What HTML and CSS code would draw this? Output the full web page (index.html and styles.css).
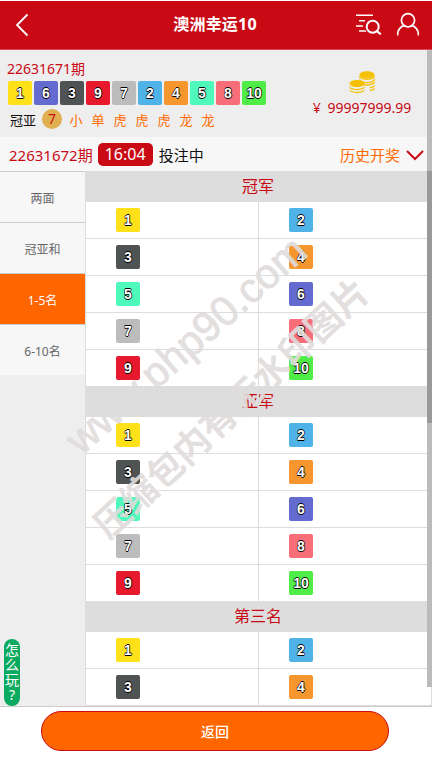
FILE: index.html
```html
<!DOCTYPE html>
<html lang="zh">
<head>
<meta charset="utf-8">
<title>澳洲幸运10</title>
<link rel="stylesheet" href="styles.css">
</head>
<body>
<div class="page">
  <header class="topbar">
    <svg class="back" width="14" height="24" viewBox="0 0 14 24"><path d="M12.5 1.5 2 12l10.500 10.500" fill="none" stroke="#fff" stroke-width="1.8"/></svg>
    <h1 class="title">澳洲幸运10</h1>
    <div class="top-icons">
      <svg width="26" height="22" viewBox="0 0 26 22"><path d="M0 2.300h17M3 7.700h6M0 13h7M3 18h7" fill="none" stroke="#fff" stroke-width="1.6"/><circle cx="16.700" cy="13.700" r="6" fill="none" stroke="#fff" stroke-width="2"/><path d="m20.800 18 4 3.300" stroke="#fff" stroke-width="2.200"/></svg>
      <svg width="22" height="24" viewBox="1 0 22 24"><circle cx="12" cy="8.200" r="6.600" fill="none" stroke="#fff" stroke-width="1.700"/><path d="M1.500 23.500c0-6.500 4-9.500 7-9.800M22.500 23.500c0-6.500-4-9.500-7-9.800" fill="none" stroke="#fff" stroke-width="1.700"/></svg>
    </div>
  </header>

  <section class="info">
    <div class="info-left">
      <div class="period">22631671期</div>
      <div class="balls">
        <span class="ball c1">1</span><span class="ball c6">6</span><span class="ball c3">3</span><span class="ball c9">9</span><span class="ball c7">7</span><span class="ball c2">2</span><span class="ball c4">4</span><span class="ball c5">5</span><span class="ball c8">8</span><span class="ball c10">10</span>
      </div>
      <div class="result">
        <span class="result-label">冠亚</span>
        <span class="sum">7</span>
        <span class="tag">小</span><span class="tag">单</span><span class="tag">虎</span><span class="tag">虎</span><span class="tag">虎</span><span class="tag">龙</span><span class="tag">龙</span>
      </div>
    </div>
    <div class="wallet">
      <svg width="26" height="26" viewBox="0 0 26 26">
        <g fill="none" stroke="#f5c000" stroke-width="1.4"><path d="M10.500 6c0 2 4 3.300 7.500 3.300S25.500 8 25.500 6M10.500 9.200c0 2 4 3.300 7.500 3.300s7.500-1.300 7.500-3.300M14 14.500c2 .6 6 .6 7 0 2-.4 4.500-1.300 4.500-2.200M21 17.700c2.500-.4 4.500-1.300 4.500-2.200M21 20.500c2.500-.4 4.500-1.300 4.500-2.200"/></g>
        <path d="M10.500 4.800c0-2 3.400-3.600 7.500-3.600s7.500 1.600 7.500 3.600-3.400 3.600-7.500 3.600-7.500-1.600-7.500-3.600Z" fill="#f5c000"/>
        <path d="M.5 13.500c0-2 3.400-3.600 7.500-3.600s7.500 1.600 7.500 3.600-3.400 3.600-7.500 3.600S.5 15.500.5 13.500Z" fill="#f5c000"/>
        <path d="M.5 15.500c0 2 3.400 3.400 7.500 3.400s7.500-1.400 7.500-3.400v1.300c0 2-3.400 3.400-7.500 3.400S.5 18.800.5 16.800ZM.5 18.500c0 2 3.400 3.400 7.500 3.400s7.500-1.400 7.500-3.400v1.300c0 2-3.400 3.400-7.500 3.400S.5 21.800.5 19.800Z" fill="#f5c000"/>
      </svg>
      <div class="money">¥ 99997999.99</div>
    </div>
  </section>

  <section class="status">
    <span class="next-period">22631672期</span>
    <span class="timer">16:04</span>
    <span class="state">投注中</span>
    <span class="history">历史开奖</span>
    <svg class="chevron" width="18" height="11" viewBox="0 0 18 11"><path d="m1 1 8 8 8-8" fill="none" stroke="#c90a15" stroke-width="2"/></svg>
  </section>

  <main class="main">
    <nav class="side">
      <a class="side-item">两面</a>
      <a class="side-item">冠亚和</a>
      <a class="side-item active">1-5名</a>
      <a class="side-item">6-10名</a>
    </nav>
    <div class="board">
      <section class="group">
        <h2 class="group-title">冠军</h2>
        <div class="grid">
          <div class="cell"><span class="ball c1">1</span></div><div class="cell"><span class="ball c2">2</span></div>
          <div class="cell"><span class="ball c3">3</span></div><div class="cell"><span class="ball c4">4</span></div>
          <div class="cell"><span class="ball c5">5</span></div><div class="cell"><span class="ball c6">6</span></div>
          <div class="cell"><span class="ball c7">7</span></div><div class="cell"><span class="ball c8">8</span></div>
          <div class="cell"><span class="ball c9">9</span></div><div class="cell"><span class="ball c10">10</span></div>
        </div>
      </section>
      <section class="group">
        <h2 class="group-title">亚军</h2>
        <div class="grid">
          <div class="cell"><span class="ball c1">1</span></div><div class="cell"><span class="ball c2">2</span></div>
          <div class="cell"><span class="ball c3">3</span></div><div class="cell"><span class="ball c4">4</span></div>
          <div class="cell"><span class="ball c5">5</span></div><div class="cell"><span class="ball c6">6</span></div>
          <div class="cell"><span class="ball c7">7</span></div><div class="cell"><span class="ball c8">8</span></div>
          <div class="cell"><span class="ball c9">9</span></div><div class="cell"><span class="ball c10">10</span></div>
        </div>
      </section>
      <section class="group">
        <h2 class="group-title">第三名</h2>
        <div class="grid">
          <div class="cell"><span class="ball c1">1</span></div><div class="cell"><span class="ball c2">2</span></div>
          <div class="cell"><span class="ball c3">3</span></div><div class="cell"><span class="ball c4">4</span></div>
        </div>
      </section>
    </div>
    <a class="howto">怎么玩?</a>
  </main>

  <footer class="footer">
    <button class="back-btn">返回</button>
  </footer>

  <div class="scroll-track"><div class="scroll-thumb"></div></div>
  <div class="mark mark-a">www.php90.com</div>
  <div class="mark mark-b">压缩包内有无水印图片</div>
</div>
</body>
</html>
```
FILE: styles.css
```css
* { box-sizing: border-box; }
html, body { margin: 0; padding: 0; }
body {
  font-family: "Noto Sans", "Noto Sans CJK SC", sans-serif;
  background: #fff;
  overflow: hidden;
}
.page {
  position: relative;
  width: 432px;
  height: 757px;
  display: flex;
  flex-direction: column;
  overflow: hidden;
}

/* header */
.topbar {
  flex: 0 0 49px;
  margin-top: 1px;
  background: #c90a15;
  display: flex;
  align-items: center;
  justify-content: center;
  position: relative;
  border-bottom: 1px solid #dc4a52;
}
.back { position: absolute; left: 15px; top: 12px; }
.title {
  margin: 0 0 2px;
  color: #fff;
  font-size: 16px;
  font-weight: 700;
  line-height: 46px;
  letter-spacing: .2px;
  padding-right: 2px;
}
.top-icons {
  position: absolute;
  right: 13px;
  top: 11px;
  display: flex;
  align-items: center;
  gap: 15px;
}

/* info */
.info {
  flex: 0 0 87px;
  background: #eee;
  display: flex;
  justify-content: space-between;
  padding: 9px 20px 0 8px;
}
.period {
  color: #c90a15;
  font-size: 14px;
  line-height: 20px;
  margin-left: -1px;
}
.balls { display: flex; gap: 2px; margin-top: 2px; }
.ball {
  width: 24px;
  height: 24px;
  flex: none;
  border-radius: 2px;
  display: inline-flex;
  align-items: center;
  justify-content: center;
  color: #fff;
  font-family: "Liberation Sans", sans-serif;
  font-size: 14px;
  font-weight: 700;
  text-shadow: .7px 0 0 #000, -.7px 0 0 #000, 0 .7px 0 #000, 0 -.7px 0 #000;
}
.c1 { background: #ffe11a; }
.c2 { background: #4fb3e8; }
.c3 { background: #4f5353; }
.c4 { background: #f6962e; }
.c5 { background: #4ff8bb; }
.c6 { background: #636bd0; }
.c7 { background: #bcbcbc; }
.c8 { background: #f86e78; }
.c9 { background: #e8192c; }
.c10 { background: #50ec48; }
.result {
  display: flex;
  align-items: center;
  margin-top: 4px;
  height: 20px;
}
.result-label {
  font-size: 13px;
  color: #111;
  margin-left: 2px;
  width: 32px;
}
.sum {
  width: 20px;
  height: 20px;
  border-radius: 50%;
  background: #e0b050;
  color: #c90a15;
  font-size: 14px;
  text-align: center;
  line-height: 20px;
  margin-right: 3px;
}
.tag {
  width: 22px;
  text-align: center;
  color: #ff6a00;
  font-size: 13px;
}
.wallet {
  display: flex;
  flex-direction: column;
  align-items: center;
  padding-top: 11px;
  width: 100px;
}
.money {
  color: #c90a15;
  font-size: 14px;
  line-height: 20px;
  margin-top: 2px;
  white-space: nowrap;
  word-spacing: 3px;
}

/* status */
.status {
  flex: 0 0 34px;
  background: #f7f7f7;
  display: flex;
  align-items: center;
  padding: 0 8px 0 9px;
}
.next-period { color: #c90a15; font-size: 15px; }
.timer {
  margin-left: 5px;
  width: 55px;
  height: 23px;
  background: #c90a15;
  color: #fff;
  border-radius: 5px;
  font-size: 16px;
  line-height: 23px;
  text-align: center;
}
.state { margin-left: 6px; font-size: 15px; color: #111; }
.history { margin-left: auto; color: #ff6a00; font-size: 15px; }
.chevron { margin-left: 6px; margin-top: 2px; }

/* main */
.main {
  flex: 0 0 536px;
  display: flex;
  position: relative;
  background: #eee;
  border-bottom: 1px solid #ccc;
  overflow: hidden;
}
.side { width: 85px; flex: none; }
.side-item {
  display: flex;
  align-items: center;
  justify-content: center;
  height: 51px;
  background: #f7f7f7;
  border-top: 1px solid #ccc;
  color: #666;
  font-size: 12px;
  padding-top: 1px;
}
.side-item.active {
  background: #ff6600;
  color: #fff;
  border-top-color: #ccc;
}
.board { flex: 1; min-width: 0; }
.group-title {
  margin: 0;
  height: 31px;
  background: #ddd;
  color: #c90a15;
  font-size: 16px;
  font-weight: 400;
  line-height: 31px;
  text-align: center;
  padding-right: 1px;
}
.grid {
  display: grid;
  grid-template-columns: 173px 1fr;
  grid-auto-rows: 37px;
  background: #fff;
  border-left: 1px solid #ddd;
  border-right: 1px solid #ddd;
  margin-bottom: -1px;
}
.cell {
  display: flex;
  align-items: flex-start;
  padding: 6px 0 0 30px;
  border-bottom: 1px solid #ddd;
}
.cell:nth-child(odd) { border-right: 1px solid #ddd; }
.howto {
  position: absolute;
  left: 4px;
  bottom: 0;
  width: 16px;
  height: 67px;
  background: #0aaa60;
  border-radius: 8px;
  color: #fff;
  font-size: 14px;
  line-height: 15px;
  text-align: center;
  padding-top: 3px;
  word-break: break-all;
  line-break: anywhere;
}

/* footer */
.footer {
  flex: 1;
  background: #fff;
  padding-top: 4px;
  display: flex;
  justify-content: flex-start;
  align-items: flex-start;
}
.back-btn {
  margin-left: 41px;
  width: 348px;
  height: 40px;
  border: 1px solid #c90a15;
  border-radius: 20px;
  background: #ff6600;
  color: #fff;
  font: 500 14px "Noto Sans", "Noto Sans CJK SC", sans-serif;
}

/* overlay scrollbar */
.scroll-track {
  position: absolute;
  left: 427px;
  top: 50px;
  width: 5px;
  height: 637px;
  background: #bbb;
}
.scroll-thumb {
  position: absolute;
  left: 0;
  top: 121px;
  width: 5px;
  height: 252px;
  background: #999;
}

/* watermark */
.mark {
  position: absolute;
  font-family: "Liberation Sans", "Noto Sans CJK SC", sans-serif;
  font-weight: 400;
  color: rgb(224, 220, 220);
  white-space: nowrap;
  line-height: 40px;
  pointer-events: none;
  opacity: .9;
}
.mark-a {
  left: 34px;
  top: 325px;
  font-size: 41.500px;
  -webkit-text-stroke: .8px rgb(224, 220, 220);
  transform: rotate(-41.500deg);
}
.mark-b {
  left: 52px;
  top: 389px;
  font-size: 36px;
  font-weight: 700;
  transform: rotate(-43deg);
}
```
